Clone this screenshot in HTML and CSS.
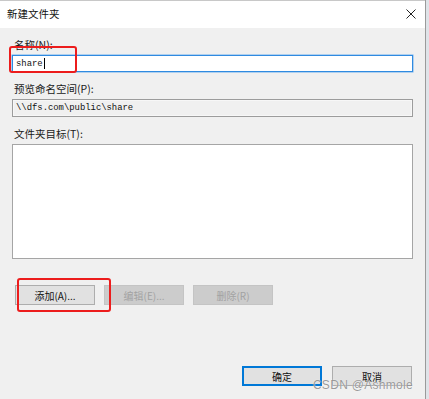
FILE: index.html
```html
<!DOCTYPE html>
<html lang="zh-CN">
<head>
  <meta charset="UTF-8">
  <title>新建文件夹</title>
  <link rel="stylesheet" href="styles.css">
</head>
<body>
  <div class="dialog">
    <div class="titlebar">
      <span class="title">新建文件夹</span>
      <svg class="close" width="10" height="10" viewBox="0 0 10 10"><path d="M0.5 0.5L9.5 9.5M9.5 0.5L0.5 9.5" stroke="#222" stroke-width="1"/></svg>
    </div>

    <div class="content">
      <div class="field">
        <label class="label">名称(N):</label>
        <div class="input active"><span class="mono">share</span><span class="caret"></span></div>
        <span class="mark mark-name"></span>
      </div>

      <div class="field">
        <label class="label">预览命名空间(P):</label>
        <div class="input readonly"><span class="mono">\\dfs.com\public\share</span></div>
      </div>

      <div class="field">
        <label class="label">文件夹目标(T):</label>
        <div class="listbox"></div>
      </div>

      <div class="actions">
        <button class="btn">添加(A)...</button>
        <button class="btn" disabled>编辑(E)...</button>
        <button class="btn" disabled>删除(R)</button>
        <span class="mark mark-add"></span>
      </div>

      <div class="footer">
        <button class="btn default">确定</button>
        <button class="btn">取消</button>
      </div>
    </div>
    <span class="watermark">CSDN @Ashmole</span>
  </div>
  <div class="edge"></div>
</body>
</html>
```

FILE: styles.css
```css
*{box-sizing:border-box;margin:0;padding:0;}
html,body{height:100%;}
body{
  display:flex;
  background:#e8e8e8;
  font-family:"Noto Sans CJK SC","Noto Sans",sans-serif;
  font-size:10.5px;
  color:#1a1a1a;
  overflow:hidden;
}
.dialog{
  position:relative;
  width:425px;
  height:399px;
  background:#f0f0f0;
  border-top:1px solid #c8c8c8;
  display:flex;
  flex-direction:column;
}
.edge{width:4px;height:399px;background:#dfe3e8;border-left:1px solid #9a9a9a;}
.titlebar{
  height:27px;
  background:#fff;
  display:flex;
  align-items:center;
  justify-content:space-between;
  padding:0 9px 0 7px;
}
.title{font-size:10.5px;color:#111;line-height:1;}
.close{display:block;margin-bottom:1px;}

.content{padding:10px 12px 0 12px;flex:1;display:flex;flex-direction:column;}
.field{position:relative;display:flex;flex-direction:column;}
.label{display:block;height:14px;line-height:14px;padding-left:2px;color:#1a1a1a;}
.field + .field{margin-top:10px;}

.input{
  height:17px;
  width:401px;
  margin-top:3px;
  display:flex;
  align-items:center;
  padding-left:3px;
}
.input.active{background:#fff;border:1px solid #2f8ae0;box-shadow:0 0 0 0.5px #6fb0ee;}
.input.readonly{height:18px;background:#f0f0f0;border:1px solid #9c9c9c;box-shadow:inset 0 0 0 1px #f7f7f7;}
.mono{font-family:"Liberation Mono",monospace;font-size:8.9px;color:#111;letter-spacing:0;}
.caret{display:inline-block;width:1px;height:11px;background:#000;margin-left:1px;}

.listbox{
  margin-top:3px;
  width:401px;
  height:115px;
  background:#fff;
  border:1px solid #a5a5a5;
}

.mark{position:absolute;border:2px solid #ec1c1c;border-radius:3px;pointer-events:none;}
.mark-name{left:-3px;top:8px;width:68px;height:27px;}
.mark-add{left:5px;top:-7px;width:94px;height:34px;}

.actions{position:relative;display:flex;gap:10px;margin-top:26px;padding-left:3px;}
.btn{
  width:80px;
  height:20px;
  font-family:"Noto Sans CJK SC","Noto Sans",sans-serif;
  font-size:10px;
  color:#111;
  background:#e1e1e1;
  border:1px solid #adadad;
}
.actions .btn + .btn{margin-left:-1px;}
.btn:disabled{background:#cccccc;border-color:#c4c4c4;color:#a2a2a2;}
.footer{display:flex;justify-content:flex-end;gap:10px;margin-top:61px;padding-right:1px;}
.btn.default{border:2px solid #0078d7;}
.watermark{
  position:absolute;
  right:12px;
  top:377px;
  font-family:"Liberation Sans",sans-serif;
  font-size:12px;
  color:rgba(110,110,110,0.7);
  text-shadow:0 0 1px #fff;
  letter-spacing:0.3px;
}
```
